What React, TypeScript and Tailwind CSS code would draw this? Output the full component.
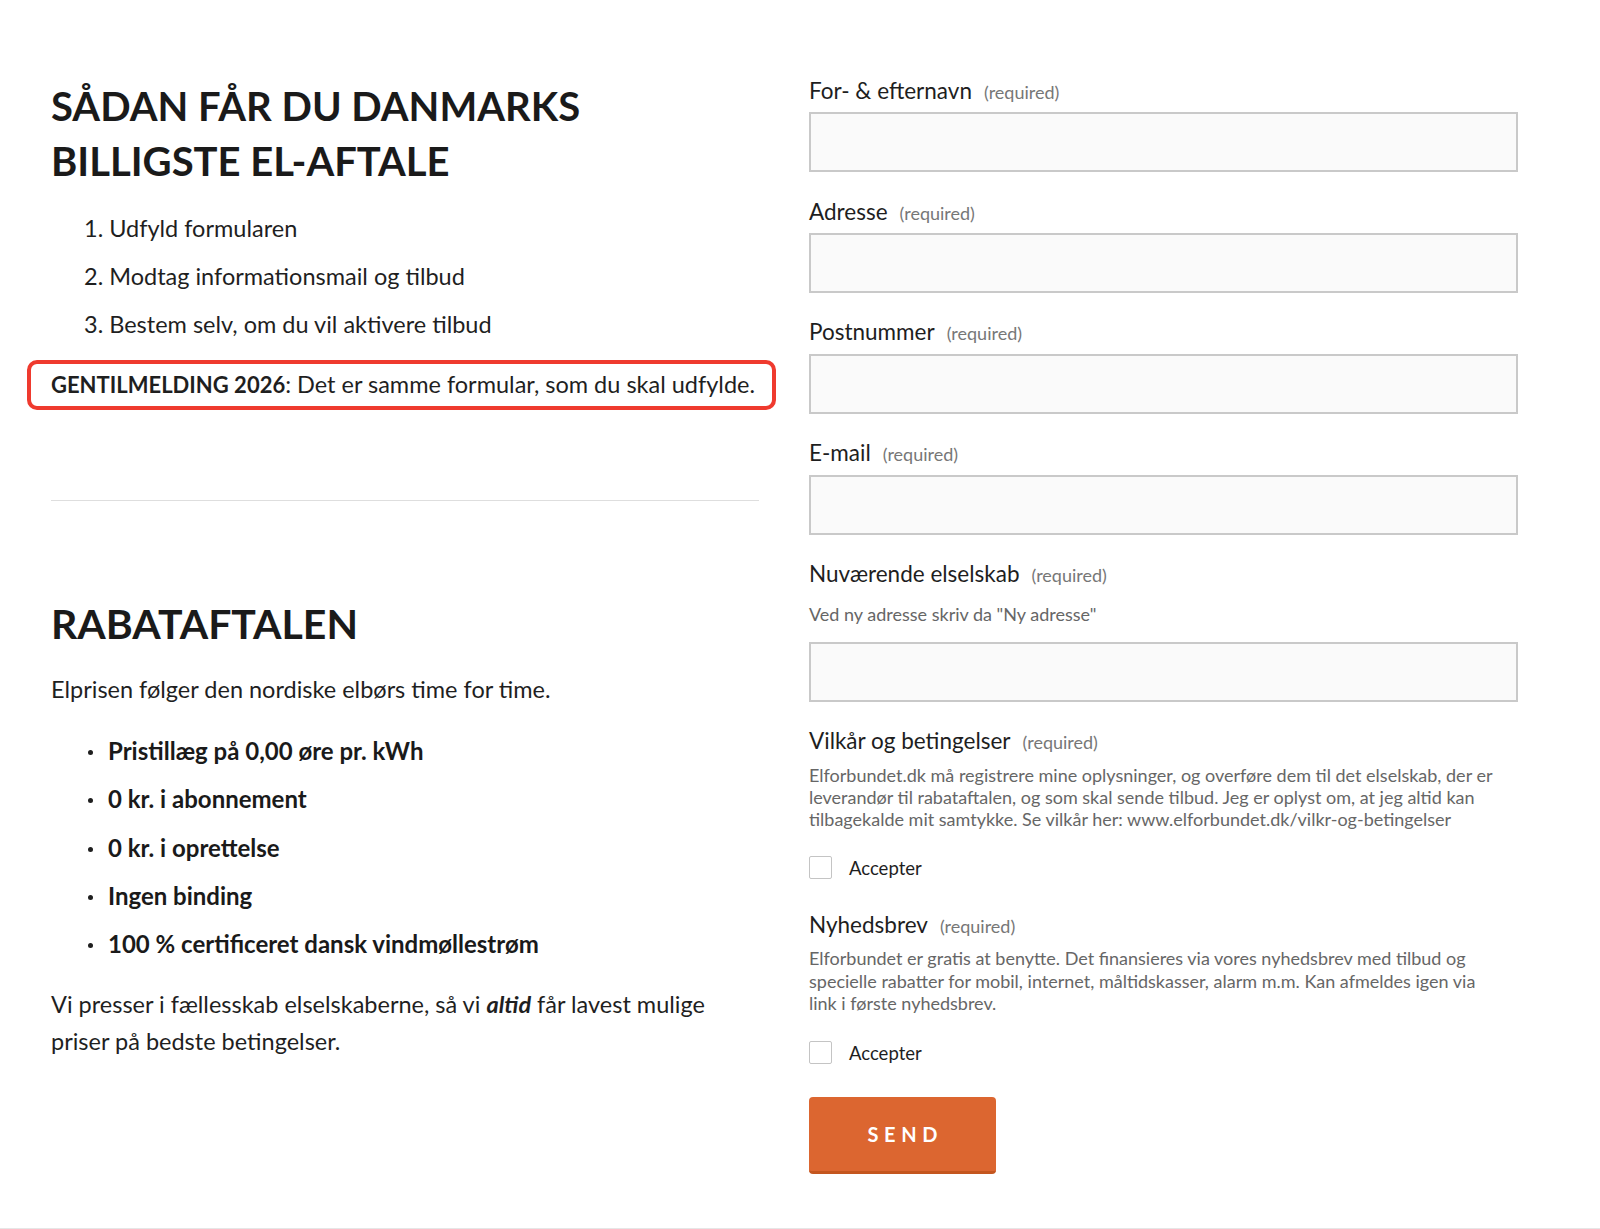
import React from "react";

function Label({ text }: { text: string }) {
  return (
    <div className="flex items-baseline h-[30px] leading-[30px]">
      <span className="text-[22.5px] text-[#1e1e1e]">{text}</span>
      <span className="ml-[12px] text-[18px] text-[#777]">(required)</span>
    </div>
  );
}

function Input({ className = "" }: { className?: string }) {
  return (
    <div
      className={
        "h-[60px] w-full border-2 border-[#c9c9c9] bg-[#fafafa] " + className
      }
    />
  );
}

function Check() {
  return (
    <div className="flex items-center h-[23px]">
      <div className="w-[23px] h-[23px] border border-[#c4c4c4] rounded-[2px] bg-white" />
      <span className="ml-[17px] text-[18.5px] leading-[22px] text-[#1e1e1e]">
        Accepter
      </span>
    </div>
  );
}

function Bullet({ children }: { children: React.ReactNode }) {
  return (
    <li className="flex items-center h-[48.3px]">
      <span className="w-[57px] flex pl-[37px]">
        <span className="block w-[5px] h-[5px] rounded-full bg-[#1f1f1f] mt-[3px]" />
      </span>
      <span className="text-[24px] font-bold leading-[48px] text-[#1a1a1a]">
        {children}
      </span>
    </li>
  );
}

export default function App() {
  return (
    <div className="[font-family:Lato,sans-serif] bg-white">
      <div className="h-[1228px] flex pl-[51px] gap-[50px]">
        {/* Left column */}
        <div className="w-[708px] pt-[79px]">
          <h1 className="text-[40px] leading-[55px] font-bold text-[#1a1a1a]">
            SÅDAN FÅR DU DANMARKS
            <br />
            BILLIGSTE EL-AFTALE
          </h1>
          <ol className="mt-[15px] pl-[33px] text-[23.5px] leading-[48px] text-[#1f1f1f]">
            <li>1. Udfyld formularen</li>
            <li>2. Modtag informationsmail og tilbud</li>
            <li>3. Bestem selv, om du vil aktivere tilbud</li>
          </ol>
          <div className="mt-[12.4px] ml-[-24px] w-[749px] h-[50px] border-4 border-[#ef3a2e] rounded-[10px] pl-[20px] leading-[40px] whitespace-nowrap text-[#1f1f1f]">
            <span className="text-[22px] font-bold">GENTILMELDING 2026</span>
            <span className="text-[23.5px]">
              : Det er samme formular, som du skal udfylde.
            </span>
          </div>
          <div className="mt-[90px] h-px bg-[#dedede] w-[708px]" />
          <h2 className="mt-[98px] text-[41px] leading-[50px] font-bold text-[#1a1a1a]">
            RABATAFTALEN
          </h2>
          <p className="mt-[22px] text-[23.5px] leading-[36px] text-[#1f1f1f]">
            Elprisen følger den nordiske elbørs time for time.
          </p>
          <ul className="mt-[19.5px]">
            <Bullet>Pristillæg på 0,00 øre pr. kWh</Bullet>
            <Bullet>0 kr. i abonnement</Bullet>
            <Bullet>0 kr. i oprettelse</Bullet>
            <Bullet>Ingen binding</Bullet>
            <Bullet>100 % certificeret dansk vindmøllestrøm</Bullet>
          </ul>
          <p className="mt-[18px] text-[23.5px] leading-[36.7px] text-[#1f1f1f]">
            Vi presser i fællesskab elselskaberne, så vi{" "}
            <b className="italic">altid</b> får lavest mulige priser på bedste
            betingelser.
          </p>
        </div>

        {/* Right column */}
        <div className="w-[709px] pt-[75.8px]">
          <Label text="For- & efternavn" />
          <Input className="mt-[6.5px]" />
          <div className="mt-[24.3px]">
            <Label text="Adresse" />
            <Input className="mt-[6.5px]" />
          </div>
          <div className="mt-[24.3px]">
            <Label text="Postnummer" />
            <Input className="mt-[6.5px]" />
          </div>
          <div className="mt-[24.3px]">
            <Label text="E-mail" />
            <Input className="mt-[6.5px]" />
          </div>
          <div className="mt-[24.6px]">
            <Label text="Nuværende elselskab" />
            <p className="mt-[14px] text-[18px] leading-[22px] text-[#666]">
              Ved ny adresse skriv da "Ny adresse"
            </p>
            <Input className="mt-[16.5px]" />
          </div>
          <div className="mt-[23.8px]">
            <Label text="Vilkår og betingelser" />
            <p className="mt-[8px] text-[18px] leading-[22.3px] text-[#666] whitespace-nowrap">
              Elforbundet.dk må registrere mine oplysninger, og overføre dem til
              det elselskab, der er
              <br />
              leverandør til rabataftalen, og som skal sende tilbud. Jeg er
              oplyst om, at jeg altid kan
              <br />
              tilbagekalde mit samtykke. Se vilkår her:
              www.elforbundet.dk/vilkr-og-betingelser
            </p>
            <div className="mt-[26px]">
              <Check />
            </div>
          </div>
          <div className="mt-[30.5px]">
            <Label text="Nyhedsbrev" />
            <p className="mt-[7.5px] text-[18px] leading-[22.3px] text-[#666] whitespace-nowrap">
              Elforbundet er gratis at benytte. Det finansieres via vores
              nyhedsbrev med tilbud og
              <br />
              specielle rabatter for mobil, internet, måltidskasser, alarm m.m.
              Kan afmeldes igen via
              <br />
              link i første nyhedsbrev.
            </p>
            <div className="mt-[27px]">
              <Check />
            </div>
          </div>
          <button className="mt-[32.5px] w-[187px] h-[77px] bg-[#dc6630] border-b-[3px] border-[#c4561f] rounded-[4px] text-white text-[20px] font-bold tracking-[0.28em] pl-[0.28em]">
            SEND
          </button>
        </div>
      </div>
      <div className="h-px bg-[#e6e6e6]" />
    </div>
  );
}
